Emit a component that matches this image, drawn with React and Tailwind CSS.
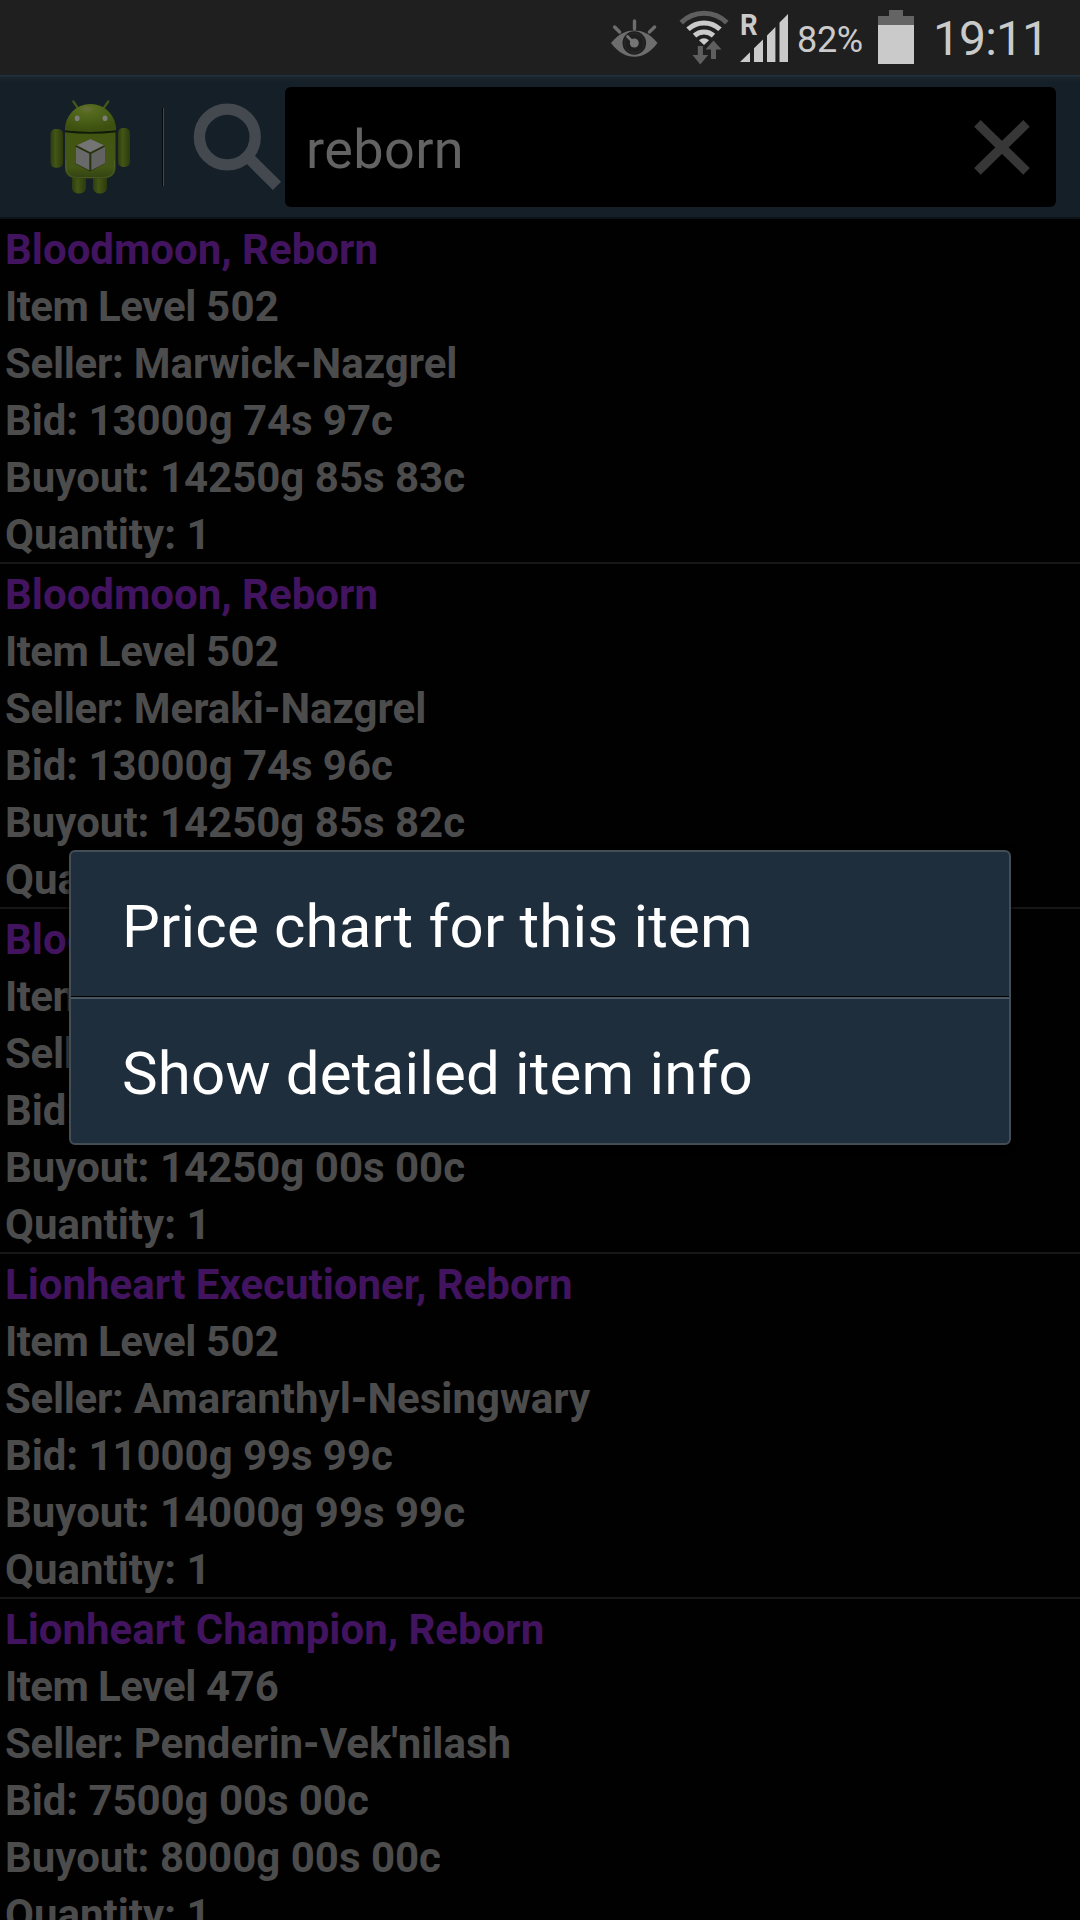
const ITEMS = [
  { name: 'Bloodmoon, Reborn', level: 502, seller: 'Marwick-Nazgrel', bid: '13000g 74s 97c', buyout: '14250g 85s 83c' },
  { name: 'Bloodmoon, Reborn', level: 502, seller: 'Meraki-Nazgrel', bid: '13000g 74s 96c', buyout: '14250g 85s 82c' },
  { name: 'Bloodmoon, Reborn', level: 502, seller: 'Marwick-Nazgrel', bid: '13000g 00s 00c', buyout: '14250g 00s 00c' },
  { name: 'Lionheart Executioner, Reborn', level: 502, seller: 'Amaranthyl-Nesingwary', bid: '11000g 99s 99c', buyout: '14000g 99s 99c' },
  { name: 'Lionheart Champion, Reborn', level: 476, seller: "Penderin-Vek'nilash", bid: '7500g 00s 00c', buyout: '8000g 00s 00c' },
];

function EyeIcon() {
  return (
    <svg className="ml-[610px] h-[75px] w-[50px] shrink-0" viewBox="610 0 50 75" fill="none">
      <g stroke="#6d6d6d" strokeWidth="3.4" strokeLinecap="round">
        <path d="M634.5 21V29M614.6 27L619.6 32M654.6 27L649.4 32" />
      </g>
      <path d="M611 43C619 33.500 626 30.500 634.300 30.500S649.500 33.500 657.500 43C650 52.800 642.500 56.700 634.300 56.700S618.500 52.800 611 43Z" fill="#6d6d6d" />
      <circle cx="634.3" cy="43" r="11.8" fill="#1f1f1f" />
      <circle cx="634.3" cy="43" r="9.6" stroke="#2b2b2b" strokeWidth="1" />
      <circle cx="634.3" cy="43" r="4.500" fill="#757575" />
      <path d="M627.5 36.500L633 42" stroke="#757575" strokeWidth="2.600" strokeLinecap="round" />
    </svg>
  );
}

function WifiIcon() {
  return (
    <svg className="ml-[18px] h-[75px] w-[52px] shrink-0" viewBox="678 0 52 75" fill="none">
      <path d="M681.200 22.600A32.500 32.500 0 0 1 726.800 22.600" stroke="#5f5f5f" strokeWidth="5" />
      <path d="M688 29.300A23.200 23.200 0 0 1 720 29.300" stroke="#cacaca" strokeWidth="5" />
      <path d="M694.500 35.600A14 14 0 0 1 713.500 35.600" stroke="#cacaca" strokeWidth="5" />
      <path d="M704 45L699 40.200A7.500 7.500 0 0 1 709 40.200Z" fill="#cacaca" />
      <path d="M713.500 40.500L721.500 49.500H716V59H711V49.500H705.500Z" fill="#5f5f5f" />
      <path d="M700.300 64.500L692.500 55H697.800V46H702.900V55H708.200Z" fill="#5f5f5f" />
    </svg>
  );
}

function SignalIcon() {
  return (
    <div className="relative ml-[10px] h-[75px] w-[49px] shrink-0">
      <svg className="h-[75px] w-[49px]" viewBox="740 0 49 75" fill="#cacaca">
        <path d="M740 62L750 52.200V62ZM754 48.300L763 39.500V62H754ZM767 35.500L775.400 27V62H767ZM779.500 22.500L788 14V62H779.500Z" />
      </svg>
      <span className="absolute left-0 top-[9px] origin-left scale-x-95 text-[29px] font-bold leading-[32px] text-[#cacaca]">R</span>
    </div>
  );
}

function BatteryIcon() {
  return (
    <svg className="ml-[15px] h-[75px] w-[36px] shrink-0" viewBox="878 0 36 75">
      <path d="M889 10H903V16H914V25H878V16H889Z" fill="#646464" />
      <path d="M878 25H914V64H878Z" fill="#cacaca" />
    </svg>
  );
}

function StatusBar() {
  return (
    <header className="flex h-[75px] bg-[#1f1f1f] text-[#cacaca]">
      <EyeIcon />
      <WifiIcon />
      <SignalIcon />
      <span className="ml-[8px] mt-[19px] w-[66px] shrink-0 whitespace-nowrap text-[36px] leading-[42px] tracking-[-0.3px]">82%</span>
      <BatteryIcon />
      <span className="ml-[19px] mt-[11px] whitespace-nowrap text-[48px] leading-[56px] tracking-[-0.9px]">19:11</span>
    </header>
  );
}

function RobotIcon() {
  return (
    <svg className="ml-[48px] h-[143px] w-[84px] shrink-0" viewBox="48 75 84 143">
      <defs>
        <linearGradient id="limb" x1="0" x2="1" y1="0" y2="0">
          <stop offset="0" stopColor="#2f3d0f" />
          <stop offset="0.4" stopColor="#435616" />
          <stop offset="1" stopColor="#2c3a0d" />
        </linearGradient>
        <linearGradient id="torso" x1="0" x2="0" y1="0" y2="1">
          <stop offset="0" stopColor="#425510" />
          <stop offset="0.75" stopColor="#445616" />
          <stop offset="1" stopColor="#334212" />
        </linearGradient>
        <radialGradient id="dome" cx="0.43" cy="0.18" r="0.75">
          <stop offset="0" stopColor="#676d3a" />
          <stop offset="0.2" stopColor="#556a1f" />
          <stop offset="0.5" stopColor="#4b6119" />
          <stop offset="1" stopColor="#3d500f" />
        </radialGradient>
      </defs>
      <path d="M73.300 101.500L77.500 107.500M108.300 101.500L104 107.500" stroke="#435719" strokeWidth="2.200" strokeLinecap="round" />
      <rect x="72" y="170" width="14" height="23.500" rx="6" fill="url(#limb)" />
      <rect x="93" y="170" width="14" height="23.500" rx="6" fill="url(#limb)" />
      <rect x="50.500" y="129" width="12.500" height="38.800" rx="5" fill="url(#limb)" />
      <rect x="118" y="128" width="12" height="39" rx="5" fill="url(#limb)" />
      <path d="M65 132H115.500V167Q115.500 178.500 103 178.500H77.500Q65 178.500 65 167Z" fill="url(#torso)" />
      <path d="M66 160V167Q66 177.500 77.500 177.500H103Q114.500 177.500 114.500 167V160" fill="none" stroke="#63713f" strokeWidth="0.800" opacity="0.500" />
      <path d="M65 130.500C64.500 116 76 104 90.500 104S116.500 116 116 130.500Q90.500 133.500 65 130.500Z" fill="url(#dome)" />
      <path d="M65 131.300Q90.500 134.300 116 131.300" fill="none" stroke="#101a0a" strokeWidth="1.800" />
      <ellipse cx="77.200" cy="118.300" rx="2.400" ry="2.800" fill="#7c7d78" />
      <ellipse cx="105" cy="118.300" rx="2.400" ry="2.800" fill="#7c7d78" />
      <path d="M90 139L105 146.500V163.500L90 171.500L75 163.500V146.500Z" fill="#26310d" />
      <path d="M90.300 139L104 145.300L90.300 152.300L76.800 145.300Z" fill="#747474" />
      <path d="M75.500 146.800L89.300 153.800V170.200L75.500 163.200Z" fill="#696969" />
      <path d="M105 146.800L91.300 153.800V170.200L105 163.200Z" fill="#626262" />
    </svg>
  );
}

function SearchBar() {
  return (
    <div className="flex h-[144px] border-b-2 border-[#0c1319] bg-[linear-gradient(#23323d_0px,#18232c_3px,#151f27_8px,#151f27_100%)]">
      <RobotIcon />
      <div className="ml-[30px] mt-[33px] h-[78px] w-[2px] border-l border-r border-l-[#050708] border-r-[#43484c]" />
      <svg className="ml-[28px] h-[142px] w-[93px] shrink-0" viewBox="192 75 93 142" fill="none" stroke="#44484f">
        <circle cx="227.300" cy="137" r="27.900" strokeWidth="11.400" />
        <path d="M250 159L277 185.800" strokeWidth="11.600" />
      </svg>
      <div className="mt-[12px] flex h-[120px] w-[771px] justify-between rounded-[6px] bg-black">
        <span className="ml-[21px] mt-[31px] text-[54px] leading-[63px] tracking-[0.4px] text-[#636363]">reborn</span>
        <svg className="mr-[26px] mt-[33px] h-[55px] w-[56px]" viewBox="0 0 56 55" stroke="#373737" strokeWidth="9.300">
          <path d="M3.400 3.400L52.500 51.300M52.500 3.400L3.400 51.300" />
        </svg>
      </div>
    </div>
  );
}

function AuctionRow({ item }) {
  return (
    <li className="flex h-[345px] shrink-0 flex-col whitespace-nowrap border-b-2 border-[#171717] pl-[5px] pt-[2px] text-[42px] font-bold leading-[57px] text-[#4c4c4c]">
      <div className="h-[57px] shrink-0 text-[#42145f]">{item.name}</div>
      <div className="h-[57px] shrink-0">
        <span className="tracking-[-0.6px]">Item </span>
        <span className="tracking-[-0.4px]">Level </span>
        <span className="tracking-[0.3px]">{item.level}</span>
      </div>
      <div className="h-[57px] shrink-0">
        <span className="tracking-[-0.3px]">Seller: </span>
        {item.seller}
      </div>
      <div className="h-[57px] shrink-0 tracking-[-0.07px]">Bid: {item.bid}</div>
      <div className="h-[57px] shrink-0">Buyout: {item.buyout}</div>
      <div className="h-[57px]">Quantity: 1</div>
    </li>
  );
}

function ContextMenu() {
  return (
    <div className="absolute left-[69px] top-[850px] w-[942px] rounded-[6px] border-2 border-[#434d55] bg-[#1e2e3c] text-[60px] leading-[71px] tracking-[0.18px] text-white shadow-[0_2px_6px_#000]">
      <div className="h-[144px] whitespace-nowrap pl-[51px] pt-[39px]">Price chart for this item</div>
      <div className="h-[3px] border-b-2 border-t border-b-[#485762] border-t-black" />
      <div className="h-[144px] whitespace-nowrap pl-[51px] pt-[39px]">Show detailed item info</div>
    </div>
  );
}

export default function App() {
  return (
    <div className="relative flex h-[1920px] w-[1080px] flex-col overflow-hidden bg-[#010101] font-['Roboto',sans-serif]">
      <StatusBar />
      <SearchBar />
      <ul className="flex flex-col">
        {ITEMS.map((item, i) => (
          <AuctionRow key={i} item={item} />
        ))}
      </ul>
      <ContextMenu />
    </div>
  );
}
